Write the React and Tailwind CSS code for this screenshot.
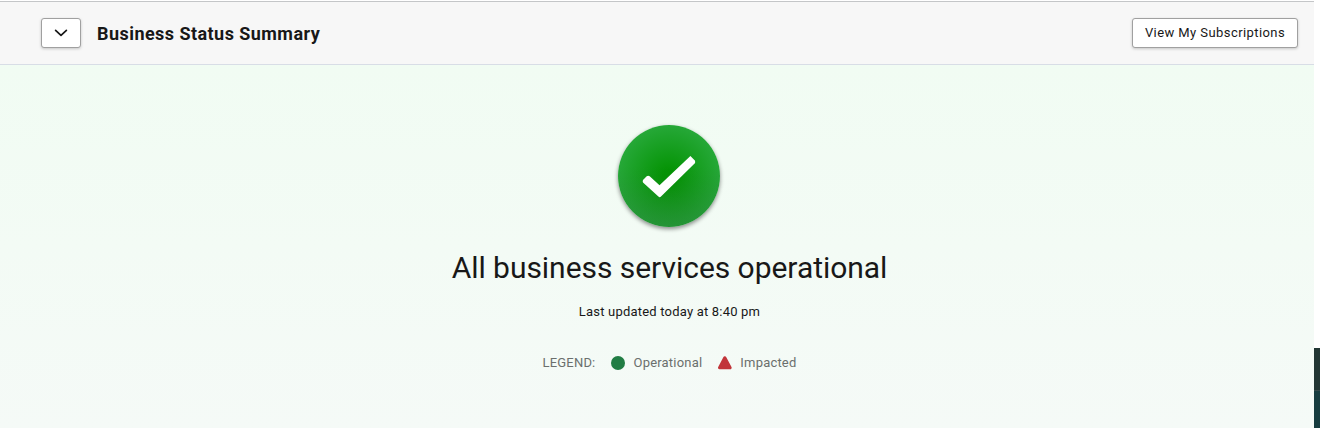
import React, { useState } from "react";

const LEGEND_ITEMS = [
  {
    label: "Operational",
    icon: (
      <svg className="w-3.5 h-3.5" viewBox="0 0 14 14">
        <circle cx="7" cy="7" r="7" fill="#217d44" />
      </svg>
    ),
  },
  {
    label: "Impacted",
    icon: (
      <svg className="w-3.5 h-3.5" viewBox="0 0 14 14">
        <path
          d="M5.3 1.2a1.7 1.7 0 0 1 3 0l5.2 9.7c.5 1.1-.1 2.3-1.2 2.3H1.4C.2 13.2-.4 12 .2 10.9z"
          fill="#c1353a"
        />
      </svg>
    ),
  },
];

const Header = ({ expanded, onToggle }) => {
  return (
    <header className="h-16 shrink-0 bg-[#f7f7f7] border-t border-t-[#c4c6c8] border-b border-b-[#d8dde6] flex items-start justify-between pl-[41px] pr-4 pt-4">
      <div className="flex items-center">
        <button
          type="button"
          aria-label="Toggle summary"
          aria-expanded={expanded}
          onClick={onToggle}
          className="w-10 h-[30px] bg-white border border-[#a0a0a0] rounded-[3px] shadow-[0_1px_3px_rgba(0,0,0,0.2)] flex items-center justify-center"
        >
          <svg className="w-3.5 h-2" viewBox="0 0 14 8" fill="none">
            <path
              d="M1.6 1.3 7 6.3l5.4-5"
              stroke="#161616"
              strokeWidth="1.7"
              strokeLinecap="round"
              strokeLinejoin="round"
            />
          </svg>
        </button>
        <h1 className="ml-4 pt-0.5 text-[18px] leading-[28px] font-bold text-[#181818] tracking-[0.45px] whitespace-nowrap">
          Business Status Summary
        </h1>
      </div>
      <button
        type="button"
        className="w-[166px] h-[30px] bg-white border border-[#a0a0a0] rounded-[3px] shadow-[0_1px_3px_rgba(0,0,0,0.2)] text-[13px] leading-[28px] text-[#181818] tracking-[0.42px] whitespace-nowrap"
      >
        View My Subscriptions
      </button>
    </header>
  );
};

const StatusBadge = () => {
  return (
    <div className="mr-px w-[102px] h-[102px] rounded-full shadow-[0_2px_4px_rgba(0,0,0,0.45)]">
      <svg className="w-full h-full" viewBox="0 0 102 102">
        <defs>
          <radialGradient id="badge" cx="0.5" cy="0.5" r="0.5">
            <stop offset="0.12" stopColor="#059405" />
            <stop offset="1" stopColor="#26a838" />
          </radialGradient>
          <linearGradient id="shade" x1="0" y1="0" x2="0" y2="1">
            <stop offset="0.4" stopColor="#204030" stopOpacity="0" />
            <stop offset="1" stopColor="#204030" stopOpacity="0.2" />
          </linearGradient>
        </defs>
        <circle cx="51" cy="51" r="51" fill="url(#badge)" />
        <circle cx="51" cy="51" r="51" fill="url(#shade)" />
        <path
          d="M25 54.9 28.7 51.3q1.5-1 3 0l9.8 9L72.4 31l4.7 4.8v2.2L43 71.6q-1.3 1.2-2.6 0L25 57.4q-.6-1.2 0-2.5z"
          fill="#fff"
        />
      </svg>
    </div>
  );
};

const App = () => {
  const [expanded, setExpanded] = useState(true);

  return (
    <div className="h-[428px] flex bg-white overflow-hidden font-['Roboto',sans-serif] antialiased">
      <main className="flex-1 flex flex-col pt-px">
        <Header expanded={expanded} onToggle={() => setExpanded(!expanded)} />

        {/* Current status */}
        <section className="flex-1 bg-linear-to-b from-[#f1fcf3] to-[#f5faf7]">
          {expanded && (
            <div className="flex flex-col items-center pt-[60px] pl-[25px]">
              <StatusBadge />
              <h2 className="mt-[21px] text-[30px] leading-[40px] text-[#181818] tracking-[-0.04px] whitespace-nowrap">
                All business services operational
              </h2>
              <p className="mt-3.5 text-[13px] leading-5 text-[#181818] tracking-[0.2px] whitespace-nowrap">
                Last updated today at 8:40 pm
              </p>
              <div className="mt-[31px] flex items-center text-[13px] leading-5 text-[#6b6f6d] whitespace-nowrap">
                <span className="tracking-[0.2px]">LEGEND:</span>
                {LEGEND_ITEMS.map((item) => (
                  <span key={item.label} className="ml-4 flex items-center gap-2">
                    {item.icon}
                    <span className="tracking-[0.2px]">{item.label}</span>
                  </span>
                ))}
              </div>
            </div>
          )}
        </section>
      </main>

      {/* Page gutter */}
      <aside className="w-1.5 shrink-0 flex flex-col justify-end">
        <div className="h-[42px] bg-[#223634]"></div>
        <div className="h-[38px] bg-[#163c3f] border-t border-[#34494a]"></div>
      </aside>
    </div>
  );
};

export default App;
